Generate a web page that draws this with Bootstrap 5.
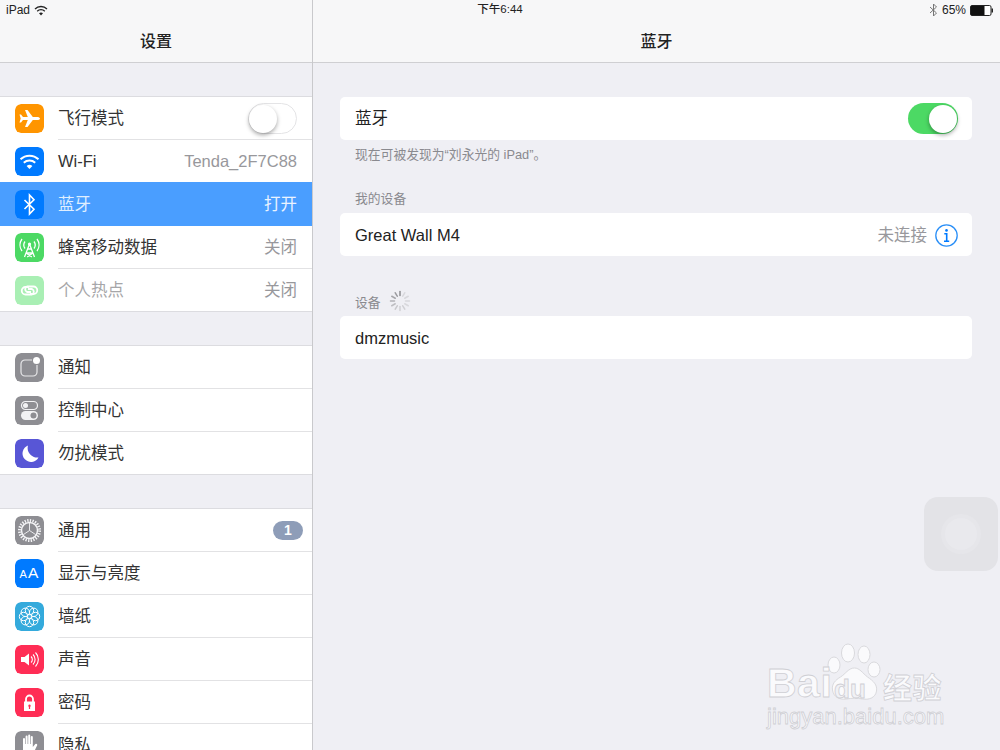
<!DOCTYPE html>
<html lang="zh-CN">
<head>
<meta charset="utf-8">
<title>蓝牙</title>
<link href="https://cdn.jsdelivr.net/npm/bootstrap@5.3.0/dist/css/bootstrap.min.css" rel="stylesheet">
<style>
html,body{width:1000px;height:750px;overflow:hidden}
body{background:#efeff4;font-family:"Liberation Sans","Noto Sans CJK SC",sans-serif;color:#222;position:relative}
.pane-left{width:313px;flex:none;height:750px;border-right:1px solid #c9c9cc;overflow:hidden}
.pane-right{flex:1 1 auto;height:750px;min-width:0}
.topbar{height:63px;background:#f7f7f8;border-bottom:1px solid #cfcfd2;padding-top:20px}
.topbar-title{height:42px;font-size:16px;line-height:44px;text-align:center;color:#222;font-weight:500}
.status-strip{position:absolute;left:0;top:0;width:1000px;height:20px;padding:0 6px;font-size:12px;line-height:19px;color:#222}
.status-strip>div{flex:1 1 0}
.clock{text-align:center;font-size:11.5px;font-weight:500}
.group-list{margin-top:33px;border-top:1px solid #dcdce0;border-bottom:1px solid #dcdce0;border-radius:0;background:#fff;flex:none}
.group-list:last-child{border-bottom:0}
.set-row{height:43px;padding:0 15px;gap:14px;background:#fff;font-size:16.5px;position:relative;flex:none;border:0;color:#333}
.set-row:last-child{height:42px}
.set-row+.set-row::before{content:"";position:absolute;left:58px;right:0;top:-1px;height:1px;background:#e2e2e4}
.set-row.picked{background:#4a9eff;color:#dfeeff;height:44px;margin-top:-1px;z-index:1}
.set-row.picked::before{display:none}
.set-row.picked .row-value{color:#eaf3ff}
.set-row.dim{color:#a6a6a8}
.row-icon{width:29px;height:29px;flex:none;border-radius:6px;display:block}
.row-value{margin-left:auto;color:#98989c;white-space:nowrap}
.toggle-off,.toggle-on{height:31px;border-radius:16px;margin-left:auto;position:relative;flex:none}
.toggle-off{width:49px;border:1px solid #e4e4e6;background:#fff}
.toggle-on{width:50px;background:#4cd964;margin-right:-1px}
.knob{position:absolute;top:1px;width:28px;height:28px;border-radius:50%;background:#fff;box-shadow:0 2px 4px rgba(0,0,0,.35)}
.toggle-off .knob{left:0}
.toggle-on .knob{right:1px;top:1.5px}
.count-pill{margin-left:auto;margin-right:-6px;width:30px;height:19px;border-radius:10px;background:#8e9db8;color:#fff;font-size:14px;font-weight:700;line-height:19px;text-align:center}
.pane-right-body{padding:34px 28px 0 27px}
.info-card{height:43px;background:#fff;border-radius:5px;padding:0 15px;font-size:16.5px;color:#222}
.info-card.row-low{padding-top:2px}
.sec-note{font-size:12.8px;line-height:18px;height:18px;color:#8a8a8f;padding-left:15px}
.note-a{margin-top:6px}
.note-b{margin-top:26px;margin-bottom:5px}
.note-c{margin-top:38px;margin-bottom:4px}
.detail-mark{flex:none;margin-right:-1px}
.assist{position:absolute;left:924px;top:497px;width:74px;height:74px;border-radius:14px;background:#e3e3e7}
.assist-dot{position:absolute;left:21px;top:21px;width:32px;height:32px;border-radius:50%;background:#e9e9ed;box-shadow:0 0 0 4px #e6e6ea}
.mark-wrap{position:absolute;left:766px;top:642px;width:190px;height:92px;color:#fafafc}
.mark-bai,.mark-du,.mark-jing,.mark-url{position:absolute;white-space:nowrap;-webkit-text-stroke:.8px #cfcfd4;font-family:"Liberation Sans","Noto Sans CJK SC",sans-serif}
.mark-bai{left:1px;top:18px;font-size:41px;font-weight:700;line-height:46px;letter-spacing:.5px}
.mark-du{left:68px;top:34px;font-size:26px;line-height:26px;font-weight:700;color:#f1f1f5}
.mark-jing{left:117px;top:30px;font-size:29px;line-height:34px;font-weight:700;letter-spacing:.5px}
.mark-url{left:1px;top:62px;font-size:22px;line-height:26px}
.mark-paw{position:absolute;left:60px;top:0}
</style>
</head>
<body class="d-flex">
<aside class="pane-left d-flex flex-column">
  <div class="topbar"><div class="topbar-title">设置</div></div>
  <div class="list-group group-list">
    <div class="list-group-item set-row d-flex align-items-center">
      <svg class="row-icon" viewBox="0 0 29 29"><rect width="29" height="29" rx="6" fill="#ff9500"/><path fill="#fff" d="M25 14.5c0-1-1.5-1.6-3-1.6h-4.200L12.500 6H10l2.800 6.900H8L6 10.500H4.500l1.200 4-1.200 4H6l2-2.400h4.800L10 23h2.500l5.300-6.900H22c1.500 0 3-.6 3-1.600z"/></svg>
      <span>飞行模式</span>
      <span class="toggle-off"><span class="knob"></span></span>
    </div>
    <div class="list-group-item set-row d-flex align-items-center">
      <svg class="row-icon" viewBox="0 0 29 29"><rect width="29" height="29" rx="6" fill="#007aff"/><g fill="none" stroke="#fff" stroke-width="2"><path d="M5.500 12.300a13 13 0 0 1 18 0"/><path d="M8.800 15.800a8.400 8.400 0 0 1 11.400 0"/></g><path fill="#fff" d="M11.600 18.900a4.400 4.400 0 0 1 5.800 0l-2.900 3z"/></svg>
      <span>Wi-Fi</span>
      <span class="row-value">Tenda_2F7C88</span>
    </div>
    <div class="list-group-item set-row picked d-flex align-items-center">
      <svg class="row-icon" viewBox="0 0 29 29"><rect width="29" height="29" rx="6" fill="#007aff"/><polyline fill="none" stroke="#fff" stroke-width="1.600" points="9.500,10 19,19.300 14.500,24 14.500,5 19,9.700 9.500,19"/></svg>
      <span>蓝牙</span>
      <span class="row-value">打开</span>
    </div>
    <div class="list-group-item set-row d-flex align-items-center">
      <svg class="row-icon" viewBox="0 0 29 29"><rect width="29" height="29" rx="6" fill="#4cd964"/><g fill="none" stroke="#fff" stroke-width="1.300"><path d="M14.500 11 9.500 24M14.500 11l5 13M12.600 16h3.800M11.200 20h6.600M11.200 20l5.600 4M17.800 20l-5.600 4"/><path d="M10 8.500a6 6 0 0 0 0 7M19 8.500a6 6 0 0 1 0 7M7 6a10 10 0 0 0 0 12M22 6a10 10 0 0 1 0 12"/></g><circle cx="14.500" cy="11" r="1.600" fill="#fff"/></svg>
      <span>蜂窝移动数据</span>
      <span class="row-value">关闭</span>
    </div>
    <div class="list-group-item set-row dim d-flex align-items-center">
      <svg class="row-icon" viewBox="0 0 29 29"><rect width="29" height="29" rx="6" fill="#a9efb4"/><g fill="none" stroke="#fff" stroke-width="1.800"><path d="M14 11H10.500a3.700 3.700 0 0 0 0 7.500H17a3 3 0 0 0 0-5.500h-4"/><path d="M15 18h3.500a3.700 3.700 0 0 0 0-7.500H12a3 3 0 0 0 0 5.500h4"/></g></svg>
      <span>个人热点</span>
      <span class="row-value">关闭</span>
    </div>
  </div>
  <div class="list-group group-list">
    <div class="list-group-item set-row d-flex align-items-center">
      <svg class="row-icon" viewBox="0 0 29 29"><rect width="29" height="29" rx="6" fill="#8e8e93"/><path fill="none" stroke="#e8e8ea" stroke-width="1.200" d="M17 7H10a4 4 0 0 0-4 4v8a4 4 0 0 0 4 4h8a4 4 0 0 0 4-4v-7"/><circle cx="21.500" cy="7.500" r="3.500" fill="#fff"/></svg>
      <span>通知</span>
    </div>
    <div class="list-group-item set-row d-flex align-items-center">
      <svg class="row-icon" viewBox="0 0 29 29"><rect width="29" height="29" rx="6" fill="#8e8e93"/><rect x="6.500" y="5.500" width="16" height="8" rx="4" fill="none" stroke="#f2f2f4" stroke-width="1.200"/><circle cx="10.500" cy="9.500" r="2.500" fill="#f2f2f4"/><rect x="6" y="15" width="17" height="9" rx="4.500" fill="#f2f2f4"/><circle cx="18.500" cy="19.500" r="3" fill="#8e8e93"/></svg>
      <span>控制中心</span>
    </div>
    <div class="list-group-item set-row d-flex align-items-center">
      <svg class="row-icon" viewBox="0 0 29 29"><rect width="29" height="29" rx="6" fill="#5856d6"/><path fill="#fff" d="M13 6.500a8.500 8.500 0 1 0 10.500 12 9.500 9.500 0 0 1-10.500-12z"/></svg>
      <span>勿扰模式</span>
    </div>
  </div>
  <div class="list-group group-list">
    <div class="list-group-item set-row d-flex align-items-center">
      <svg class="row-icon" viewBox="0 0 29 29"><rect width="29" height="29" rx="6" fill="#8e8e93"/><circle cx="14.500" cy="14.500" r="10" fill="none" stroke="#f4f4f6" stroke-width="3" stroke-dasharray="1.310 1.310"/><circle cx="14.500" cy="14.500" r="8" fill="none" stroke="#f4f4f6" stroke-width="1.500"/><path fill="none" stroke="#f4f4f6" stroke-width=".9" d="M14.500 14.500V7M14.500 14.500l-6 4M14.500 14.500l6 4"/></svg>
      <span>通用</span>
      <span class="count-pill">1</span>
    </div>
    <div class="list-group-item set-row d-flex align-items-center">
      <svg class="row-icon" viewBox="0 0 29 29"><rect width="29" height="29" rx="6" fill="#007aff"/><text x="4.500" y="19" font-size="11" fill="#fff" font-family="Liberation Sans">A</text><text x="13" y="19" font-size="15.500" fill="#fff" font-family="Liberation Sans">A</text></svg>
      <span>显示与亮度</span>
    </div>
    <div class="list-group-item set-row d-flex align-items-center">
      <svg class="row-icon" viewBox="0 0 29 29"><rect width="29" height="29" rx="6" fill="#34aadc"/><g fill="none" stroke="#fff" stroke-width="1"><circle cx="14.500" cy="8.500" r="4.200"/><circle cx="14.500" cy="20.500" r="4.200"/><circle cx="8.500" cy="14.500" r="4.200"/><circle cx="20.500" cy="14.500" r="4.200"/><circle cx="10.300" cy="10.300" r="4.200"/><circle cx="18.700" cy="10.300" r="4.200"/><circle cx="10.300" cy="18.700" r="4.200"/><circle cx="18.700" cy="18.700" r="4.200"/></g></svg>
      <span>墙纸</span>
    </div>
    <div class="list-group-item set-row d-flex align-items-center">
      <svg class="row-icon" viewBox="0 0 29 29"><rect width="29" height="29" rx="6" fill="#ff2d55"/><path fill="#fff" d="M6 12h3.500L14 8.500v12L9.500 17H6z"/><g fill="none" stroke="#fff" stroke-width="1.100"><path d="M16 11.500a4 4 0 0 1 0 6"/><path d="M18 9.500a7 7 0 0 1 0 10"/><path d="M20.500 7.500a10 10 0 0 1 0 14"/></g></svg>
      <span>声音</span>
    </div>
    <div class="list-group-item set-row d-flex align-items-center">
      <svg class="row-icon" viewBox="0 0 29 29"><rect width="29" height="29" rx="6" fill="#ff2d55"/><path fill="none" stroke="#fff" stroke-width="1.800" d="M11 14v-3a3.500 3.500 0 0 1 7 0v3"/><path fill="#fff" fill-rule="evenodd" d="M9 13.500h11V23H9zM14.500 16.500a1.300 1.300 0 0 0-.6 2.400V21h1.200v-2.100a1.300 1.300 0 0 0-.6-2.400z"/></svg>
      <span>密码</span>
    </div>
    <div class="list-group-item set-row d-flex align-items-center">
      <svg class="row-icon" viewBox="0 0 29 29"><rect width="29" height="29" rx="6" fill="#8e8e93"/><path fill="#fff" d="M8 14v-6a1 1 0 0 1 2 0v5h.6V5.500a1 1 0 0 1 2 0V13h.6V4.500a1 1 0 0 1 2 0V13h.6V6a1 1 0 0 1 2 0v10l2.500-3a1.200 1.200 0 0 1 1.800 1.500L18 23a4 4 0 0 1-3 2h-3a4 4 0 0 1-4-4z"/></svg>
      <span>隐私</span>
    </div>
  </div>
</aside>
<main class="pane-right d-flex flex-column">
  <div class="topbar"><div class="topbar-title">蓝牙</div></div>
  <div class="pane-right-body">
    <div class="info-card d-flex align-items-center">
      <span>蓝牙</span>
      <span class="toggle-on"><span class="knob"></span></span>
    </div>
    <div class="sec-note note-a">现在可被发现为“刘永光的 iPad”。</div>
    <div class="sec-note note-b">我的设备</div>
    <div class="info-card row-low d-flex align-items-center">
      <span>Great Wall M4</span>
      <span class="row-value me-2">未连接</span>
      <svg width="23" height="23" viewBox="0 0 23 23" class="detail-mark"><circle cx="11.500" cy="11.500" r="10.700" fill="none" stroke="#2a8ff7" stroke-width="1.300"/><circle cx="11.500" cy="6.400" r="1.300" fill="#007aff"/><path fill="none" stroke="#007aff" stroke-width="1.600" d="M9.300 9.800h2.400V17M9 17.200h5.200"/></svg>
    </div>
    <div class="sec-note note-c d-flex align-items-center gap-2">
      <span>设备</span>
      <svg width="22" height="22" viewBox="-11 -11 22 22" class="mb-1" stroke-width="1.500" stroke-linecap="round">
        <g stroke="#8c8c90"><line y1="-5.500" y2="-9.500"/></g>
        <g stroke="#9a9a9e"><line y1="-5.500" y2="-9.500" transform="rotate(-30)"/></g>
        <g stroke="#a6a6aa"><line y1="-5.500" y2="-9.500" transform="rotate(-60)"/></g>
        <g stroke="#b2b2b6"><line y1="-5.500" y2="-9.500" transform="rotate(-90)"/></g>
        <g stroke="#bebec2"><line y1="-5.500" y2="-9.500" transform="rotate(-120)"/></g>
        <g stroke="#c8c8cc"><line y1="-5.500" y2="-9.500" transform="rotate(-150)"/></g>
        <g stroke="#d0d0d4"><line y1="-5.500" y2="-9.500" transform="rotate(180)"/><line y1="-5.500" y2="-9.500" transform="rotate(150)"/></g>
        <g stroke="#d8d8dc"><line y1="-5.500" y2="-9.500" transform="rotate(120)"/><line y1="-5.500" y2="-9.500" transform="rotate(90)"/><line y1="-5.500" y2="-9.500" transform="rotate(60)"/><line y1="-5.500" y2="-9.500" transform="rotate(30)"/></g>
      </svg>
    </div>
    <div class="info-card row-low d-flex align-items-center"><span>dmzmusic</span></div>
  </div>
</main>
<div class="status-strip d-flex">
  <div class="d-flex align-items-center gap-1">
    <span>iPad</span>
    <svg width="14" height="11" viewBox="0 0 14 11"><g fill="none" stroke="#222" stroke-width="1.300"><path d="M1 4a8.500 8.500 0 0 1 12 0"/><path d="M3.200 6.300a5.300 5.300 0 0 1 7.600 0"/></g><path fill="#222" d="M5 8.300a3 3 0 0 1 4 0L7 10.500z"/></svg>
  </div>
  <div class="clock">下午6:44</div>
  <div class="d-flex align-items-center justify-content-end gap-1">
    <svg width="9" height="14" viewBox="0 0 9 14"><polyline fill="none" stroke="#777" stroke-width="1" points="1,4 7.500,10 4.500,13 4.500,1 7.500,4 1,10"/></svg>
    <span>65%</span>
    <svg width="24" height="11" viewBox="0 0 24 11"><rect x=".5" y=".5" width="20.500" height="10" rx="1.500" fill="#fff" stroke="#222"/><rect x="1" y="1" width="13.500" height="9" fill="#111"/><rect x="21.500" y="3.500" width="1.500" height="4" fill="#222"/></svg>
  </div>
</div>
<div class="assist"><div class="assist-dot"></div></div>
<div class="mark-wrap">
  <svg class="mark-paw" width="60" height="62" viewBox="0 0 60 62" fill="#fafafc" stroke="#d2d2d6" stroke-width=".8"><ellipse cx="8" cy="23" rx="6" ry="8"/><ellipse cx="22" cy="11" rx="6.500" ry="9"/><ellipse cx="38" cy="12.500" rx="6" ry="8.500"/><ellipse cx="48" cy="27.500" rx="6" ry="7.500"/><path d="M28.500 26c5 0 8 5 13 9 6 4 10 8 9 14-1 7-8 9-14 8-5-1-11-1-16 0-7 1-13-2-14-9-1-6 3-10 8-13 5-3 8-9 14-9z"/></svg>
  <span class="mark-bai">Bai</span>
  <span class="mark-du">du</span>
  <span class="mark-jing">经验</span>
  <span class="mark-url">jingyan.baidu.com</span>
</div>
</body>
</html>
